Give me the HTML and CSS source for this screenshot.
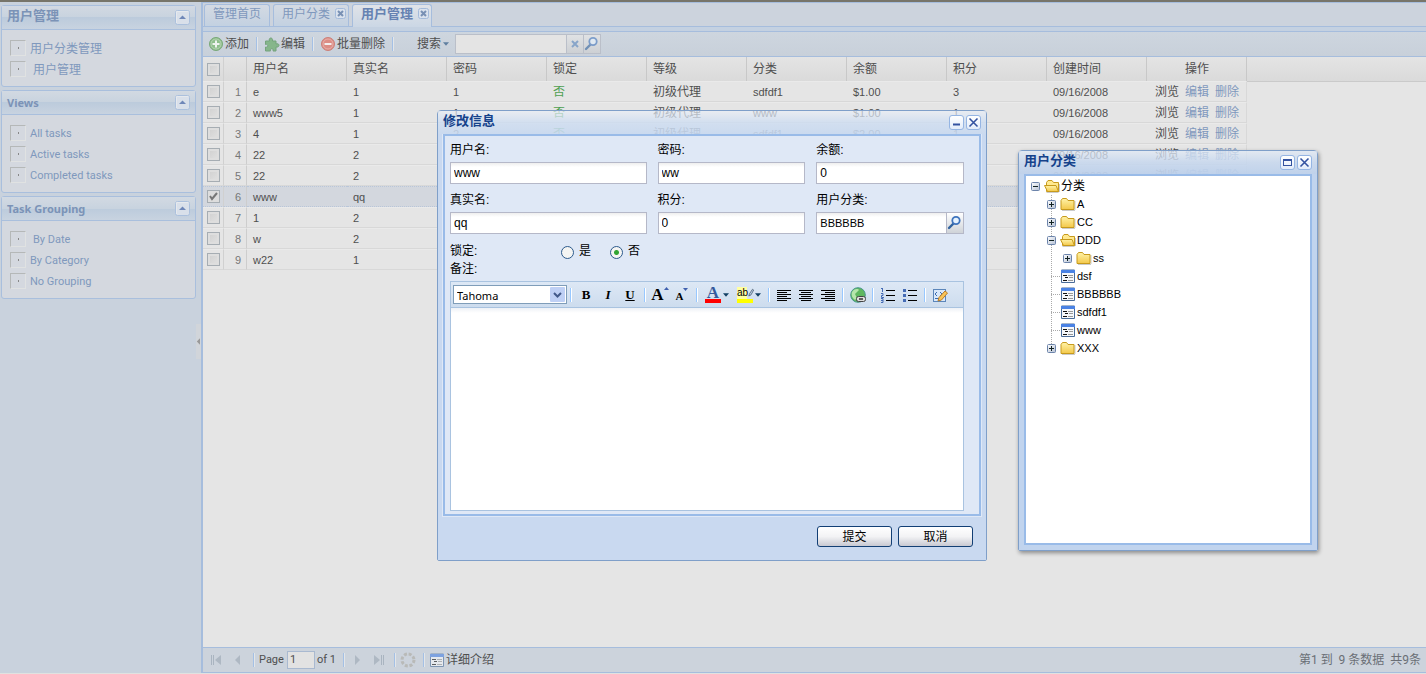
FILE: index.html
```html
<!DOCTYPE html>
<html lang="zh-CN">
<head>
<meta charset="utf-8">
<title>用户管理</title>
<link rel="stylesheet" href="styles.css">
</head>
<body>
<svg class="defs" aria-hidden="true">
  <defs>
    <linearGradient id="gold" x1="0" y1="0" x2="0" y2="1"><stop offset="0" stop-color="#fff3a8"/><stop offset="1" stop-color="#f3c84a"/></linearGradient>
    <linearGradient id="knob" x1="0" y1="0" x2="1" y2="1"><stop offset="0" stop-color="#fff"/><stop offset="1" stop-color="#b4c0d4"/></linearGradient>
    <symbol id="folder" viewBox="0 0 16 16"><path d="M2 14.500h13M15 5v9" stroke="#999" opacity=".5"/><path d="M1 13.500V4.500L2.500 2.500h4L8 4.500h6v9z" fill="url(#gold)" stroke="#c79a1c"/></symbol>
    <symbol id="folder-open" viewBox="0 0 16 16"><path d="M2.500 14.500h12M15.500 6v8" stroke="#999" opacity=".5"/><path d="M2.500 13.500v-9L4 2.500h4L9.500 4.500h5v9z" fill="#ffe98f" stroke="#c79a1c"/><path d="M.5 7.500h11.500l2.500 6h-11z" fill="url(#gold)" stroke="#c79a1c"/></symbol>
    <symbol id="leaf" viewBox="0 0 16 16"><path d="M1.500 2v12.500h13V2z" fill="#f6f8fb" stroke="#4a6c98"/><path d="M1 2h14v3H1z" fill="#4a82e4"/><path d="M3 7.500h4M5 9.500h3M3 12.500h4" stroke="#111"/><path d="M8 7.500h5M9 9.500h4M8 12.500h5" stroke="#999"/></symbol>
    <symbol id="plus" viewBox="0 0 9 9"><rect x=".5" y=".5" width="8" height="8" rx="1" fill="url(#knob)" stroke="#6c84ab"/><path d="M2 4.500h5M4.500 2v5" stroke="#122"/></symbol>
    <symbol id="minus" viewBox="0 0 9 9"><rect x=".5" y=".5" width="8" height="8" rx="1" fill="url(#knob)" stroke="#6c84ab"/><path d="M2 4.500h5" stroke="#122"/></symbol>
    <symbol id="collapse" viewBox="0 0 15 15"><rect x=".5" y=".5" width="14" height="14" rx="2" fill="#d9e0ea" stroke="#abc0dd"/><path d="M1.500 13V1.500h12" fill="none" stroke="#e6e9ed"/><path d="M4 9h7L7.500 5.500z" fill="#6f87b8"/></symbol>
    <symbol id="tab-x" viewBox="0 0 11 11"><rect x=".5" y=".5" width="10" height="10" rx="2" fill="#dae2ed" stroke="#a4bbdb"/><path d="M3 3l5 5M8 3l-5 5" stroke="#7890b4" stroke-width="2"/></symbol>
    <symbol id="lens" viewBox="0 0 16 16"><path d="M2 13l4-4" stroke="#31639f" stroke-width="2.400" stroke-linecap="round"/><circle cx="9" cy="5.500" r="3.700" fill="#e6f3ff" stroke="#3f74bd" stroke-width="1.800"/></symbol>
  </defs>
</svg>

<div class="app">
  <aside class="sidebar">
    <section class="panel">
      <h2 class="panel-title cjk-title">用户管理<button class="toggle" type="button" aria-label="收起"><svg><use href="#collapse"/></svg></button></h2>
      <ul class="links cjk">
        <li><i class="thumb"></i><a href="#">用户分类管理</a></li>
        <li><i class="thumb"></i><a href="#" class="inset">用户管理</a></li>
      </ul>
    </section>
    <section class="panel">
      <h2 class="panel-title">Views<button class="toggle" type="button" aria-label="收起"><svg><use href="#collapse"/></svg></button></h2>
      <ul class="links">
        <li><i class="thumb"></i><a href="#">All tasks</a></li>
        <li><i class="thumb"></i><a href="#">Active tasks</a></li>
        <li><i class="thumb"></i><a href="#">Completed tasks</a></li>
      </ul>
    </section>
    <section class="panel">
      <h2 class="panel-title">Task Grouping<button class="toggle" type="button" aria-label="收起"><svg><use href="#collapse"/></svg></button></h2>
      <ul class="links">
        <li><i class="thumb"></i><a href="#" class="inset">By Date</a></li>
        <li><i class="thumb"></i><a href="#">By Category</a></li>
        <li><i class="thumb"></i><a href="#">No Grouping</a></li>
      </ul>
    </section>
    <button class="splitter" type="button" aria-label="折叠侧栏"><svg viewBox="0 0 5 8"><path d="M5 0v8L1 4z" fill="#999"/></svg></button>
  </aside>

  <main class="main">
    <nav class="tabs">
      <a class="tab" href="#">管理首页</a>
      <a class="tab" href="#">用户分类<svg><use href="#tab-x"/></svg></a>
      <a class="tab active" href="#">用户管理<svg><use href="#tab-x"/></svg></a>
    </nav>
    <div class="toolbar">
      <button class="tool" type="button"><svg viewBox="0 0 16 16"><circle cx="8" cy="8" r="6.500" fill="#8fbf8c" stroke="#79a878"/><circle cx="8" cy="8" r="5" fill="none" stroke="#b5d3b2"/><path d="M8 4.500v7M4.500 8h7" stroke="#eef3ee" stroke-width="2"/></svg>添加</button>
      <i class="sep"></i>
      <button class="tool" type="button"><svg viewBox="0 0 16 16"><path d="M1.500 5h4c-1.500-4 4-4 3 0H12v3c4-1.500 4 4 0 3v4H9c1-3-3.500-3-2.500 0h-5v-4c3 1 3-3.500 0-2.500z" fill="#86b68b" stroke="#75a37d"/></svg>编辑</button>
      <i class="sep"></i>
      <button class="tool" type="button"><svg viewBox="0 0 16 16"><circle cx="8" cy="8" r="6.500" fill="#dc8d85" stroke="#cc8079"/><circle cx="8" cy="8" r="5" fill="none" stroke="#e8b0aa"/><path d="M4.500 8h7" stroke="#f3eeee" stroke-width="2"/></svg>批量删除</button>
      <i class="sep"></i>
      <button class="tool search-menu" type="button">搜索<svg class="caret" viewBox="0 0 5 3"><path d="M0 0h5L2.500 3z" fill="#5f7fa0"/></svg></button>
      <div class="search">
        <input type="text" aria-label="搜索">
        <button type="button" aria-label="清除"><svg viewBox="0 0 16 16"><path d="M5 5l6 6M11 5l-6 6" stroke="#88a5c9" stroke-width="2"/></svg></button>
        <button type="button" aria-label="查找"><svg class="faded" viewBox="0 0 16 16"><use href="#lens"/></svg></button>
      </div>
    </div>

    <div class="grid">
      <div class="grid-head"></div>
      <table>
        <colgroup><col class="c-check"><col class="c-num"><col><col><col><col><col><col><col><col><col><col></colgroup>
        <thead>
          <tr><th class="tick"><input type="checkbox" aria-label="全选"></th><th></th><th>用户名</th><th>真实名</th><th>密码</th><th>锁定</th><th>等级</th><th>分类</th><th>余额</th><th>积分</th><th>创建时间</th><th class="ops">操作</th></tr>
        </thead>
        <tbody>
          <tr><td class="tick"><input type="checkbox" aria-label="1"></td><td class="num">1</td><td>e</td><td>1</td><td>1</td><td class="cjk no">否</td><td class="cjk">初级代理</td><td>sdfdf1</td><td>$1.00</td><td>3</td><td>09/16/2008</td><td class="ops"><span>浏览</span><a href="#">编辑</a><a href="#">删除</a></td></tr>
          <tr><td class="tick"><input type="checkbox" aria-label="2"></td><td class="num">2</td><td>www5</td><td>1</td><td>1</td><td class="cjk no">否</td><td class="cjk">初级代理</td><td>www</td><td>$1.00</td><td>1</td><td>09/16/2008</td><td class="ops"><span>浏览</span><a href="#">编辑</a><a href="#">删除</a></td></tr>
          <tr><td class="tick"><input type="checkbox" aria-label="3"></td><td class="num">3</td><td>4</td><td>1</td><td>2</td><td class="cjk no">否</td><td class="cjk">初级代理</td><td>sdfdf1</td><td>$2.00</td><td>1</td><td>09/16/2008</td><td class="ops"><span>浏览</span><a href="#">编辑</a><a href="#">删除</a></td></tr>
          <tr><td class="tick"><input type="checkbox" aria-label="4"></td><td class="num">4</td><td>22</td><td>2</td><td></td><td></td><td></td><td></td><td></td><td></td><td>09/16/2008</td><td class="ops"><span>浏览</span><a href="#">编辑</a><a href="#">删除</a></td></tr>
          <tr><td class="tick"><input type="checkbox" aria-label="5"></td><td class="num">5</td><td>22</td><td>2</td><td></td><td></td><td></td><td></td><td></td><td></td><td>09/16/2008</td><td class="ops"><span>浏览</span><a href="#">编辑</a><a href="#">删除</a></td></tr>
          <tr class="selected"><td class="tick"><input type="checkbox" aria-label="6" checked></td><td class="num">6</td><td>www</td><td>qq</td><td></td><td></td><td></td><td></td><td></td><td></td><td></td><td></td></tr>
          <tr><td class="tick"><input type="checkbox" aria-label="7"></td><td class="num">7</td><td>1</td><td>2</td><td></td><td></td><td></td><td></td><td></td><td></td><td></td><td></td></tr>
          <tr><td class="tick"><input type="checkbox" aria-label="8"></td><td class="num">8</td><td>w</td><td>2</td><td></td><td></td><td></td><td></td><td></td><td></td><td></td><td></td></tr>
          <tr><td class="tick"><input type="checkbox" aria-label="9"></td><td class="num">9</td><td>w22</td><td>1</td><td></td><td></td><td></td><td></td><td></td><td></td><td></td><td></td></tr>
        </tbody>
      </table>
    </div>

    <footer class="pager">
      <button type="button" aria-label="首页"><svg viewBox="0 0 16 16"><path d="M3.500 3v10M5.500 3v10" stroke="#a9b4c0"/><path d="M13 3v10L7 8z" fill="#aeb8c3"/></svg></button>
      <button type="button" aria-label="上一页"><svg viewBox="0 0 16 16"><path d="M10 3v10L5 8z" fill="#aeb8c3"/></svg></button>
      <i class="sep"></i>
      <label class="page-box">Page <input type="text" value="1"></label><span>of 1</span>
      <i class="sep"></i>
      <button type="button" aria-label="下一页"><svg viewBox="0 0 16 16"><path d="M6 3v10l5-5z" fill="#aeb8c3"/></svg></button>
      <button type="button" aria-label="末页"><svg viewBox="0 0 16 16"><path d="M3 3v10l6-5z" fill="#aeb8c3"/><path d="M10.500 3v10M12.500 3v10" stroke="#a9b4c0"/></svg></button>
      <i class="sep"></i>
      <button type="button" aria-label="刷新"><svg viewBox="0 0 16 16"><circle cx="8" cy="8" r="6" fill="none" stroke="#b9bab8" stroke-width="3" stroke-dasharray="3 1.700"/></svg></button>
      <i class="sep"></i>
      <button class="detail" type="button"><svg class="faded" viewBox="0 0 16 16"><use href="#leaf"/></svg>详细介绍</button>
      <span class="summary">第1 到&nbsp; 9 条数据&nbsp; 共9条</span>
    </footer>
  </main>
</div>

<section class="window edit-window" role="dialog" aria-label="修改信息">
  <header class="window-title">修改信息
    <span class="window-tools">
      <button type="button" aria-label="最小化"><svg viewBox="0 0 13 13"><path d="M3 8.500h7" stroke="#3352a0" stroke-width="2"/></svg></button>
      <button type="button" aria-label="关闭"><svg viewBox="0 0 13 13"><path d="M2.500 2.500l8 8M10.500 2.500l-8 8" stroke="#3352a0" stroke-width="1.600"/></svg></button>
    </span>
  </header>
  <form class="form">
    <div class="fields">
      <label>用户名:<input type="text" value="www"></label>
      <label>密码:<input type="text" value="ww"></label>
      <label>余额:<input type="text" value="0"></label>
      <label>真实名:<input type="text" value="qq"></label>
      <label>积分:<input type="text" value="0"></label>
      <div class="picker">
        <label for="category">用户分类:</label>
        <div class="picker-box"><input id="category" type="text" value="BBBBBB"><button type="button" aria-label="选择分类"><svg viewBox="0 0 16 16"><use href="#lens"/></svg></button></div>
      </div>
    </div>
    <div class="lock"><span class="lock-label">锁定:</span>
      <label><input type="radio" name="lock">是</label>
      <label><input type="radio" name="lock" checked>否</label>
    </div>
    <div class="note">备注:</div>
    <div class="editor">
      <div class="editor-bar">
        <span class="font-box"><select aria-label="字体"><option>Tahoma</option></select><svg viewBox="0 0 15 15"><rect width="15" height="15" rx="1" fill="#bfd0f5"/><path d="M4 6l3.500 3.500L11 6" fill="none" stroke="#42598a" stroke-width="2"/></svg></span>
        <i class="sep"></i>
        <button class="glyph" type="button"><b>B</b></button>
        <button class="glyph" type="button"><em>I</em></button>
        <button class="glyph" type="button"><u>U</u></button>
        <i class="sep"></i>
        <button class="glyph big" type="button">A<svg viewBox="0 0 5 3"><path d="M0 3h5L2.500 0z" fill="#3f5fae"/></svg></button>
        <button class="glyph small" type="button">A<svg viewBox="0 0 5 3"><path d="M0 0h5L2.500 3z" fill="#3f5fae"/></svg></button>
        <i class="sep"></i>
        <button class="glyph color-a" type="button"><span>A</span><svg class="caret" viewBox="0 0 5 3"><path d="M0 0h5L2.500 3z" fill="#123f63"/></svg></button>
        <button class="glyph color-b" type="button"><span>ab<svg viewBox="0 0 8 12"><path d="M1 10l1-3 4-6 1.500 1L4 8.500z" fill="#bcd3ee" stroke="#456"/></svg></span><svg class="caret" viewBox="0 0 5 3"><path d="M0 0h5L2.500 3z" fill="#123f63"/></svg></button>
        <i class="sep"></i>
        <button type="button" aria-label="左对齐"><svg viewBox="0 0 16 16"><path d="M1 3.500h14M1 5.500h10M1 7.500h14M1 9.500h10M1 11.500h14M1 13.500h10" stroke="#000"/></svg></button>
        <button type="button" aria-label="居中"><svg viewBox="0 0 16 16"><path d="M1 3.500h14M3 5.500h10M1 7.500h14M3 9.500h10M1 11.500h14M3 13.500h10" stroke="#000"/></svg></button>
        <button type="button" aria-label="右对齐"><svg viewBox="0 0 16 16"><path d="M1 3.500h14M5 5.500h10M1 7.500h14M5 9.500h10M1 11.500h14M5 13.500h10" stroke="#000"/></svg></button>
        <i class="sep"></i>
        <button type="button" aria-label="链接"><svg viewBox="0 0 16 16"><circle cx="8" cy="8" r="7.300" fill="#5fb75f" stroke="#48968a"/><path d="M2 5c3-4 6-3 7-2L5 7l2 4-2 2C2 11 1 8 2 5z" fill="#b6e6ac"/><rect x="6.500" y="9.500" width="9" height="5" rx="2" fill="#ddd" stroke="#444"/><path d="M9 12h4" stroke="#333" stroke-width="1.500"/></svg></button>
        <i class="sep"></i>
        <button type="button" aria-label="编号列表"><svg viewBox="0 0 16 16"><path d="M6 3.500h9M6 8.500h9M6 13.500h9" stroke="#000"/><path d="M1 1.500h1.500M2.500 1v4M1 6.500h2v2H1.500v2H4M1 11.500h2v4H1M1 13.500h2" fill="none" stroke="#446bb5"/></svg></button>
        <button type="button" aria-label="项目列表"><svg viewBox="0 0 16 16"><path d="M6 3.500h9M6 8.500h9M6 13.500h9" stroke="#000"/><path d="M1 2h3v3H1zM1 7h3v3H1zM1 12h3v3H1z" fill="#446bb5"/></svg></button>
        <i class="sep"></i>
        <button type="button" aria-label="源代码"><svg viewBox="0 0 16 16"><rect x="1.500" y="2.500" width="12" height="12" fill="#d9e8fa" stroke="#5c86ba"/><path d="M5 5L3 7l2 2M8 5l2 2-2 2M3 11.500h6" fill="none" stroke="#3c6cb0"/><path d="M6 14l1-3.500L13 4l2.500 2L9.500 13z" fill="#f9c458" stroke="#b87c28"/></svg></button>
      </div>
      <textarea aria-label="备注"></textarea>
    </div>
  </form>
  <div class="actions"><button type="button">提交</button><button type="button">取消</button></div>
</section>

<section class="window tree-window" role="dialog" aria-label="用户分类">
  <header class="window-title">用户分类
    <span class="window-tools">
      <button type="button" aria-label="最大化"><svg viewBox="0 0 13 13"><rect x="2.500" y="3.500" width="8" height="6" fill="none" stroke="#3352a0"/><path d="M2 4h9" stroke="#3352a0" stroke-width="2"/></svg></button>
      <button type="button" aria-label="关闭"><svg viewBox="0 0 13 13"><path d="M2.500 2.500l8 8M10.500 2.500l-8 8" stroke="#3352a0" stroke-width="1.600"/></svg></button>
    </span>
  </header>
  <ul class="tree">
    <li><span class="node"><svg class="knob"><use href="#minus"/></svg><svg><use href="#folder-open"/></svg><span class="root">分类</span></span>
      <ul class="branch">
        <li><span class="node"><svg class="knob"><use href="#plus"/></svg><svg><use href="#folder"/></svg>A</span></li>
        <li><span class="node"><svg class="knob"><use href="#plus"/></svg><svg><use href="#folder"/></svg>CC</span></li>
        <li><span class="node"><svg class="knob"><use href="#minus"/></svg><svg><use href="#folder-open"/></svg>DDD</span>
          <ul><li><span class="node"><svg class="knob"><use href="#plus"/></svg><svg><use href="#folder"/></svg>ss</span></li></ul>
        </li>
        <li><span class="node"><i class="elbow"></i><svg><use href="#leaf"/></svg>dsf</span></li>
        <li><span class="node"><i class="elbow"></i><svg><use href="#leaf"/></svg>BBBBBB</span></li>
        <li><span class="node"><i class="elbow"></i><svg><use href="#leaf"/></svg>sdfdf1</span></li>
        <li><span class="node"><i class="elbow"></i><svg><use href="#leaf"/></svg>www</span></li>
        <li><span class="node"><svg class="knob"><use href="#plus"/></svg><svg><use href="#folder"/></svg>XXX</span></li>
      </ul>
    </li>
  </ul>
</section>
</body>
</html>
```

FILE: styles.css
```css
* { box-sizing: border-box; }
body {
  margin: 0;
  font: 11px/20px "Liberation Sans", "Noto Sans CJK SC", sans-serif;
  color: #4f4f4f;
  background: #c9d2dd;
}
button { border: 0; padding: 0; background: none; font: inherit; color: inherit; }
input, select, textarea { font: inherit; color: inherit; border-radius: 0; outline: 0; }
a { color: #7f98bd; text-decoration: none; }
ul { list-style: none; margin: 0; padding: 0; }
svg { display: block; width: 16px; height: 16px; flex: none; }
.defs { position: absolute; width: 0; height: 0; }
.cjk { font-size: 12px; }
.faded { opacity: .6; }

.app {
  display: flex;
  height: 100vh;
  border-top: 2px solid #77756a;
  border-bottom: 1px solid #e0e2e0;
  overflow: hidden;
}

/* Sidebar */
.sidebar {
  position: relative;
  flex: none;
  width: 201px;
  padding: 3px 5px 0 1px;
  display: flex;
  flex-direction: column;
  gap: 3px;
  font-family: Roboto, "Noto Sans CJK SC", sans-serif;
}
.panel { border: 1px solid #a9bfdd; border-radius: 3px; background: #d4d8df; }
.panel-title {
  display: flex;
  align-items: center;
  justify-content: space-between;
  height: 24px;
  margin: 0;
  padding: 0 5px;
  border-bottom: 1px solid #a9bfdd;
  font-family: "Noto Sans", "Noto Sans CJK SC", sans-serif;
  font-size: 11px;
  line-height: 18px;
  color: #7b93b7;
  background: linear-gradient(#d2d9e2, #c8d3df 50%, #bccbdc 50%, #c8d3e0);
}
.cjk-title { font-size: 13px; align-items: flex-start; }
.toggle svg { width: 15px; height: 15px; }
.cjk-title .toggle { padding-top: 4px; }
.links { padding: 8px 8px 6px; }
.links li { display: flex; align-items: center; height: 21px; gap: 4px; }
.links .inset { padding-left: 3px; }
.thumb {
  width: 16px;
  height: 16px;
  margin-bottom: 2px;
  border: 1px solid;
  border-color: #b5b8b8 #e0e2e2 #e0e2e2 #b5b8b8;
  background: linear-gradient(#888, #888) 7px 6px / 1px 2px no-repeat;
}
.splitter {
  position: absolute;
  right: 0;
  top: 322px;
  width: 5px;
  height: 35px;
  background: #d1d5da;
}
.splitter svg { width: 4px; height: 7px; }

/* Main area */
.main {
  flex: 1;
  min-width: 0;
  display: flex;
  flex-direction: column;
  border: solid #a6bddd;
  border-width: 1px 0 1px 2px;
}
.tabs {
  display: flex;
  gap: 3px;
  height: 24px;
  padding: 1px 1px 0;
  border-bottom: 1px solid #a6bddd;
  background: #ccd3dd;
}
.tab {
  display: flex;
  gap: 5px;
  padding: 0 8px;
  line-height: 18px;
  font-size: 12px;
  border: 1px solid #a6bddd;
  border-bottom: 0;
  border-radius: 3px 3px 0 0;
  background: linear-gradient(#d4dae3, #c3d1e1);
}
.tab svg { width: 11px; height: 11px; margin: 3px -6px 0 0; }
.tab.active {
  font-size: 13px;
  font-weight: bold;
  color: #6682b2;
  background: linear-gradient(#e0e3e8, #cbd7e5);
  margin-bottom: -1px;
}
.sep { flex: none; width: 2px; height: 14px; background: #a4c0e5; border-right: 1px solid #e3e6e9; }
.toolbar {
  display: flex;
  align-items: center;
  flex: none;
  height: 30px;
  padding: 0 5px;
  border-top: 4px solid #c4d1e1;
  border-bottom: 1px solid #a6bddd;
  font-size: 12px;
  background: linear-gradient(#ced6df, #c8d0da);
  box-shadow: inset 0 1px #a6bddd;
}
.tool { display: flex; align-items: center; gap: 1px; }
.toolbar .sep { margin: 0 6px 0 7px; }
.caret { width: 6px; height: 4px; margin-left: 1px; }
.search-menu { margin: 0 6px 0 17px; }
.search { display: flex; height: 20px; border: 1px solid #babfc9; }
.search input { width: 110px; border: 0; background: #e4e4e4; }
.search button {
  width: 17px;
  border-left: 1px solid #babfc9;
  background: linear-gradient(#e0e2e4, #cdd0d4);
}

/* Grid */
.grid { position: relative; flex: 1; min-height: 0; background: #e5e5e5; overflow: hidden; }
.grid-head {
  height: 25px;
  border-bottom: 1px solid #cacaca;
  background: linear-gradient(#e4e4e4, #dadada);
}
table {
  position: absolute;
  top: 0;
  left: 0;
  width: 1044px;
  table-layout: fixed;
  border-collapse: separate;
  border-spacing: 0;
}
.c-check { width: 21px; }
.c-num { width: 23px; }
th {
  height: 24px;
  padding: 0 6px;
  border-right: 1px solid #c8c8c8;
  text-align: left;
  font-size: 12px;
  font-weight: normal;
}
td {
  height: 21px;
  padding: 0 6px;
  line-height: 18px;
  border-top: 1px solid #eaeaea;
  border-bottom: 1px solid #d8d8d8;
  white-space: nowrap;
}
.num { padding: 0 5px 0 0; text-align: right; color: #777; border-right: 1px solid #cdcdcd; }
.tick { padding: 0 0 0 4px; border-right: 1px solid #d0d0d0; }
.tick input {
  appearance: none;
  display: block;
  width: 13px;
  height: 13px;
  margin: 0;
  border: 1px solid #a6adb3;
  background: linear-gradient(135deg, #cfcfcf, #e2e2e2);
  box-shadow: inset 0 0 0 2px #dedede;
}
.tick input:checked {
  background: #ddd url("data:image/svg+xml,%3Csvg xmlns='http://www.w3.org/2000/svg' viewBox='0 0 11 11'%3E%3Cpath d='M2 5l2 3 5-6' fill='none' stroke='%23777' stroke-width='2'/%3E%3C/svg%3E");
  box-shadow: none;
}
.no { color: #4fa052; }
.ops { padding: 0 0 0 1px; font-size: 12px; text-align: center; }
td.ops { border-right: 1px solid #d8d8d8; }
.ops a { margin-left: 6px; }
.selected td { background: #d3d7de; border-top: 1px dotted #b9c6d9; border-bottom: 1px dotted #b9c6d9; }

/* Pager */
.pager {
  display: flex;
  align-items: center;
  flex: none;
  height: 25px;
  padding: 0 5px;
  border-top: 1px solid #a6bddd;
  font-family: Roboto, "Noto Sans CJK SC", sans-serif;
  background: #ccd3dc;
}
.pager button + button { margin-left: 6px; }
.pager .sep { margin: 0 4px 0 7px; }
.page-box { display: flex; align-items: center; gap: 3px; }
.page-box input {
  width: 28px;
  height: 18px;
  margin-right: 2px;
  padding: 0 2px;
  border: 1px solid #a9b9d0;
  background: #e2e2e2;
}
.detail { display: flex; align-items: center; gap: 1px; font-size: 12px; }
.summary { margin-left: auto; font-size: 12px; color: #6a6f76; }

/* Floating windows */
.window {
  position: absolute;
  display: flex;
  flex-direction: column;
  border: 1px solid #7f9fc9;
  border-radius: 4px 4px 2px 2px;
  color: #000;
}
.window-title {
  display: flex;
  justify-content: space-between;
  height: 23px;
  padding: 0 5px;
  font-size: 13px;
  font-weight: bold;
  color: #15428b;
  background: linear-gradient(rgba(235, 240, 248, .65), rgba(205, 221, 242, .8) 50%, rgba(200, 217, 240, .9));
}
.window-tools { display: flex; gap: 2px; padding-top: 4px; }
.window-tools button {
  width: 15px;
  height: 15px;
  border: 1px solid #95b5e3;
  border-radius: 3px;
  background: linear-gradient(#fff, #e2ecfa);
}
.window-tools svg { width: 13px; height: 13px; }
.edit-window { left: 437px; top: 110px; width: 550px; }
.form {
  border: 2px solid #99bbe8;
  outline: 1px solid #dfe8f6;
  padding: 5px 15px 3px 5px;
  background: #dfe8f6;
  box-shadow: 0 0 0 5px #c9d9f0;
  margin: 0 5px;
  clip-path: inset(0 -5px -5px);
}
.fields {
  display: grid;
  grid-template-columns: 197fr 148fr 148fr;
  column-gap: 11px;
  row-gap: 7px;
  font-size: 12px;
}
.fields label { display: block; line-height: 18px; }
.fields input {
  display: block;
  width: 100%;
  height: 22px;
  margin-top: 3px;
  padding: 0 3px;
  border: 1px solid #b5b8c8;
  background: linear-gradient(#eee, #fff 4px);
}
.picker-box { display: flex; margin-top: 3px; border: 1px solid #b5b8c8; }
.picker-box input { flex: 1; min-width: 0; height: 20px; margin: 0; border: 0; font-size: 11px; }
.picker-box button {
  width: 17px;
  border-left: 1px solid #b5b8c8;
  background: linear-gradient(#fff, #cfd3d8);
}
.lock { display: flex; align-items: center; height: 20px; margin-top: 7px; font-size: 12px; }
.lock-label { width: 111px; }
.lock label { display: flex; align-items: center; gap: 5px; width: 49px; }
.lock input {
  appearance: none;
  width: 13px;
  height: 13px;
  margin: 2px 0 0;
  border: 1px solid #2c5a8c;
  border-radius: 50%;
  background: #f5f5f3;
}
.lock input:checked { background: radial-gradient(circle, #32a532 2px, #f5f5f3 3px); }
.note { height: 16px; line-height: 16px; font-size: 12px; margin-bottom: 4px; }
.editor { border: 1px solid #a9c3e0; }
.editor-bar {
  display: flex;
  align-items: center;
  height: 26px;
  padding: 0 2px;
  border-bottom: 1px solid #a9c3e0;
  background: linear-gradient(#dde8f5, #cddcee);
}
.editor-bar .sep { margin: 0 3px; background: #98c8ff; border-color: #fff; }
.editor-bar button { flex: none; width: 22px; display: flex; justify-content: center; }
.font-box { position: relative; width: 114px; height: 19px; flex: none; }
.font-box select {
  appearance: none;
  width: 100%;
  height: 19px;
  padding: 0 3px;
  border: 1px solid #7f9db9;
  font-family: "Noto Sans", sans-serif;
  font-size: 11px;
  background: #fff;
}
.font-box svg { position: absolute; right: 2px; top: 2px; width: 15px; height: 15px; pointer-events: none; }
.glyph { font: bold 13px/16px "Liberation Serif", serif; }
.glyph svg { width: 5px; height: 3px; }
.glyph.big { font-size: 17px; }
.glyph.small { align-items: flex-end; font-size: 11px; height: 18px; }
.glyph.small svg { margin-bottom: 13px; }
.editor-bar .color-a, .editor-bar .color-b { width: 32px; align-items: center; gap: 1px; }
.glyph .caret { width: 6px; height: 4px; }
.color-a span { width: 16px; border-bottom: 4px solid #f00; color: #35599c; font-size: 17px; line-height: 13px; }
.color-b span {
  display: flex;
  width: 16px;
  border-bottom: 4px solid #ff0;
  font: 10px/12px "Liberation Sans", sans-serif;
  background: linear-gradient(90deg, #ffffa0 60%, transparent 60%);
}
.color-b span svg { width: 6px; height: 12px; }
textarea { display: block; width: 100%; height: 202px; border: 0; resize: none; background: linear-gradient(#eef1f6, #fff 5px); }
.actions {
  display: flex;
  justify-content: flex-end;
  gap: 6px;
  margin-top: 3px;
  padding: 7px 13px 13px;
  background: #c9d9f0;
}
.actions button {
  width: 75px;
  height: 21px;
  border: 1px solid #123f75;
  border-radius: 3px;
  font-size: 12px;
  line-height: 16px;
  background: linear-gradient(#fff, #f3f3f5 50%, #c8c9d2);
}

.tree-window { left: 1018px; top: 150px; width: 300px; box-shadow: 1px 2px 4px rgba(0, 0, 0, .4); }
.tree-window .window-title { background: linear-gradient(rgba(225, 234, 246, .7), rgba(198, 215, 238, .85) 50%, rgba(190, 209, 235, .95)); }
.tree {
  height: 371px;
  margin: 0 5px 5px;
  padding: 1px 5px;
  border: 2px solid #99bbe8;
  background: #fff;
  box-shadow: 0 0 0 5px #c1d4ee;
  clip-path: inset(0 -5px -5px);
}
.node { display: flex; align-items: center; height: 18px; }
.knob { width: 9px; height: 9px; margin-right: 4px; }
.node svg + svg, .elbow + svg { margin-right: 1px; }
.root { font-size: 12px; }
.tree ul { padding-left: 16px; }
.branch { background: repeating-linear-gradient(#aaa 0 1px, transparent 1px 2px) 20px 0 / 1px 153px no-repeat; }
.elbow { width: 9px; margin: 0 0 0 4px; border-top: 1px dotted #aaa; }
```
